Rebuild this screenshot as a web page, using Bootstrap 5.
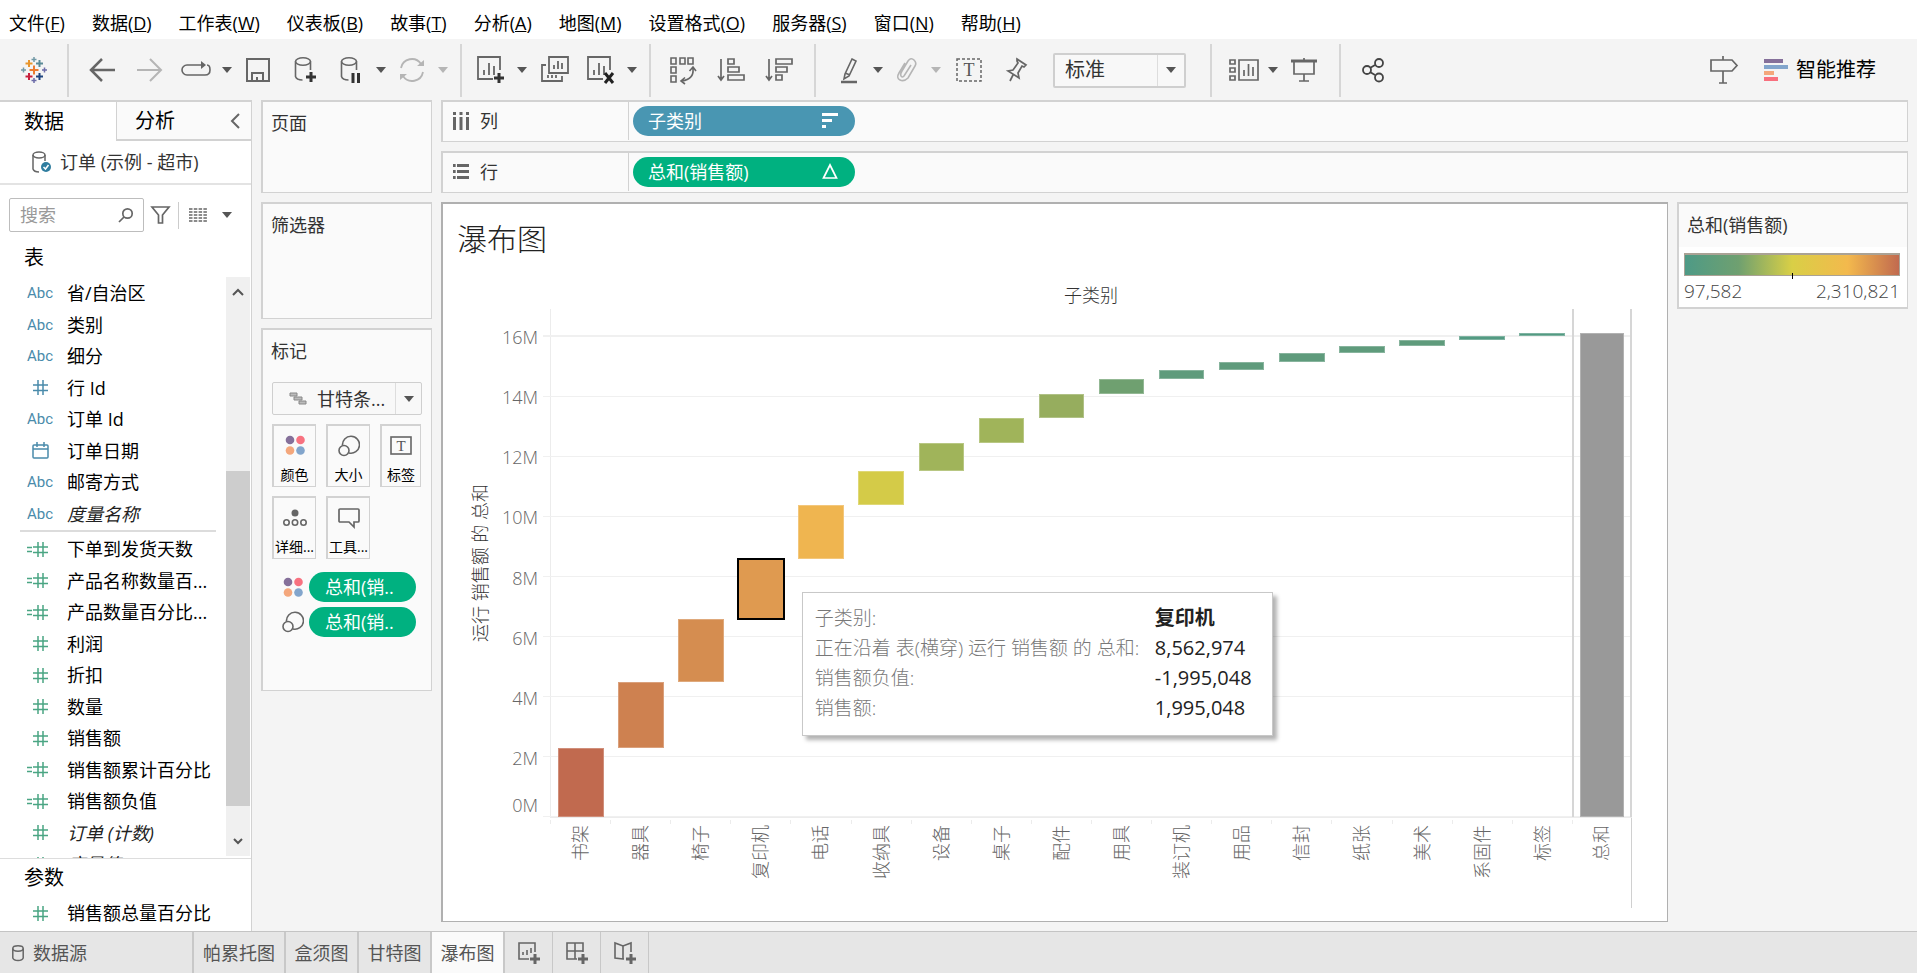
<!DOCTYPE html>
<html lang="zh-CN">
<head>
<meta charset="utf-8">
<meta name="viewport" content="width=device-width, initial-scale=1">
<title>瀑布图</title>
<link href="https://cdn.jsdelivr.net/npm/bootstrap@5.3.0/dist/css/bootstrap.min.css" rel="stylesheet">
<script src="https://cdn.jsdelivr.net/npm/bootstrap@5.3.0/dist/js/bootstrap.bundle.min.js" defer></script>
<style>
:root{--line:#d2d2d2;--ico:#666;--green:#00b180;--blue:#4996b2}
body{font-family:"Open Sans","Noto Sans CJK SC",sans-serif;font-size:18px;line-height:26px;color:#000;background:#f4f4f4;overflow:hidden}
button{font-family:inherit;color:inherit;background:none;border:0;padding:0}
svg{display:block;flex:none;overflow:visible}
.ln{fill:none;stroke:var(--ico);stroke-width:2}
.menubar{height:39px;padding:6px 0 0 9px;gap:27px}
.menubar a{color:#000;text-decoration:none}
.toolbar{height:61px;padding:1px 41px 0 10px}
.tb{display:flex;align-items:center;justify-content:center;height:40px;width:44px}
.tb.w-l{width:48px}.tb.w-s{width:40px}
.caret-btn{width:18px;height:34px;display:flex;align-items:center;justify-content:center}
.caret-btn::after,.caret-tri{content:"";border:5px solid transparent;border-top:6px solid #555;border-bottom:0}
.caret-btn.off::after{border-top-color:#b5b5b5}
.vsep{width:2px;height:53px;background:#d6d6d6}
.combo{border:2px solid #cfcfcf;border-radius:2px;background:#f8f8f8}
.combo select{appearance:none;border:0;background:none;outline:0;color:#333;min-width:0}
.combo .drop{border-left:1px solid #ddd;display:flex;align-items:center;justify-content:center}
.fit{width:133px;height:35px;font-size:20px}
.fit .drop{width:27px}
.fit select{padding-left:10px}
.showme{font-size:20px;gap:8px}
.main-row{gap:9px;padding:0 9px 9px 0}
.sidebar{width:252px;border-right:1px solid var(--line);margin-bottom:-9px}
.side-tabs{height:41px;font-size:20px}
.side-tabs button{border-top:2px solid var(--line);text-align:left}
.side-tabs .on{width:116px;padding-left:24px}
.side-tabs .off{background:#fafafa;border-left:1px solid var(--line);border-bottom:2px solid var(--line);padding:0 11px 0 18px}
.source{height:44px;padding-left:32px;gap:9px;color:#333;border-bottom:2px solid #e3e3e3}
.search-row{padding:13px 0 0 9px}
.search{width:135px;height:34px;border:1px solid #bdbdbd;border-radius:2px;padding:0 10px}
.search input{border:0;outline:0;width:100%;min-width:0;padding:0}
.search input::placeholder{color:#999;opacity:1}
.head{font-size:20px;padding-left:24px}
.head-tables{height:45px;padding-top:13px}
.head-params{height:38px;padding-top:6px}
.fields{display:grid;grid-auto-rows:32px 31px;margin:0;padding:0;list-style:none}
.fields li{display:flex;align-items:center;gap:13px;padding-left:26px;white-space:nowrap}
.fields .ic{width:28px;display:flex;justify-content:center;flex:none}
.abc{font:15px Roboto,sans-serif;color:#4a8bab}
.fields i{color:#222}
.divider{height:2px;background:#dcdcdc;margin:1px 10px 1px 20px}
.sbar{width:24px;background:#f0f0f0;margin:0 1px 2px 0}
.sbar .thumb{background:#cdcdcd;flex:345}
.params{border-top:1px solid #ddd;padding-bottom:2px}
.shelves{width:171px;gap:9px;color:#333}
.pane{background:#fafafa;border:1px solid var(--line);border-top-width:2px;border-left-width:2px}
.pane h2{font-size:18px;line-height:26px;font-weight:400;margin:0;padding:8px 0 0 8px}
.p-pages{height:93px}.p-filters{height:117px}.p-marks{height:363px}
.marktype{margin:18px 9px 9px;height:33px;border-width:1px}
.marktype .drop{width:27px}
.marktype .nm{padding-left:16px;gap:10px}
.marktype select{width:78px;padding:0}
.cards{display:grid;grid-template-columns:44px 44px 41px;gap:9px 10px;margin:0 9px}
.cards button{height:63px;border:2px solid var(--line);border-right-width:1px;border-bottom-width:1px;background:#fafafa;font-size:14px;line-height:20px;color:#000;display:flex;flex-direction:column;align-items:center;justify-content:space-between;padding:9px 0 1px;white-space:nowrap}
.enc{margin:13px 15px 0 18px;gap:5px}
.enc div{height:30px;gap:5px}
.enc .ei{width:23px;display:flex;justify-content:center}
.pillx{height:30px;border-radius:15px;color:#fff;background:var(--green);padding:0 16px;display:flex;align-items:center;justify-content:space-between}
.shelf{height:42px;color:#333;padding-bottom:2px}
.shelf .lab{width:186px;gap:11px;padding-left:10px}
.shelf .lab::after{content:"";width:1px;height:39px;background:var(--line);margin-left:auto}
.shelf .pillx{width:222px;margin-left:4px;padding:0 17px 0 15px}
.work{gap:9px}
.sheet{background:#fff;border:1px solid #b0b0b0;border-top-width:2px;border-left-width:2px;font-weight:300}
.sheet h1{font-size:30px;line-height:40px;font-weight:300;margin:15px 0 23px 14px;color:#222}
.chart{display:grid;grid-template-columns:28px 18px 61px minmax(0,1fr) 35px;grid-template-rows:27px minmax(0,1fr) 90px 13px;color:#666}
.ctitle{grid-area:1/4;text-align:center;color:#333}
.ytitle{grid-area:2/2;display:flex;align-items:center;justify-content:center;color:#333}
.rot{writing-mode:vertical-rl;text-orientation:sideways;transform:rotate(180deg);white-space:nowrap}
.yaxis{grid-area:2/3;position:relative}
.yaxis span{position:absolute;right:12px;transform:translateY(50%)}
.yaxis span:last-child{transform:none}
.plot{grid-area:2/4;position:relative;border-left:1px solid #ececec;border-bottom:1px solid #ececec;display:grid;grid-template-columns:repeat(18,1fr)}
.gl{position:absolute;left:-8px;right:0;height:1px;background:#f0f0f0}
.gl:first-child{height:2px}
.colx{display:flex;flex-direction:column-reverse;align-items:center;position:relative}
.colx .bar{width:76%;flex:none;box-shadow:inset 0 0 0 1px rgba(255,255,255,.25)}
.colx .bar.sel{outline:2px solid #000;outline-offset:-1px}
.colx.total{border-left:2px solid #d6d6d6;border-right:2px solid #d6d6d6}
.xaxis{grid-area:3/4;display:grid;grid-template-columns:repeat(18,1fr)}
.xaxis div{display:flex;justify-content:center;align-items:flex-start;padding-top:7px;background:linear-gradient(#ececec,#ececec) 0 2px/1px 4px no-repeat}
.xaxis div:last-child{border-right:1px solid #d0d0d0}
.tipbox{position:absolute;left:23.2%;top:55.7%;z-index:3;width:471px;height:144px;background:#fff;border:1px solid #c8c8c8;box-shadow:4px 4px 4px rgba(0,0,0,.3);padding:10px 12px;font-size:20px;line-height:30px;color:#787878;white-space:nowrap}
.tipbox td{padding:0;color:#222;font-weight:500}
.tipbox tr:first-child td{font-weight:600}
.tipbox th{font-size:19px;font-weight:300;padding:0;width:340px}
.legend{width:231px;height:107px;background:#fff;border-bottom-width:2px}
.legend .t{height:43px;background:#fafafa;padding:8px 8px 0;color:#333}
.legend .ramp{height:23px;margin:6px 7px 0 5px;border:1px solid #aaa295;border-top-width:2px;position:relative;background:linear-gradient(90deg,#4e9a86,#6fa070 25%,#d9cf46 50%,#f3b94d 76%,#c16a4f)}
.legend .ramp::after{content:"";position:absolute;left:50%;bottom:-4px;width:1px;height:6px;background:#000}
.legend .r{padding:2px 7px 0 5px;color:#444;font-weight:300;font-size:19px}
.sheets{height:42px;background:#e6e6e6;border-top:1px solid #c4c4c4;color:#555;position:relative}
.sheets button{border-right:2px solid #c8c8c8;padding:0 7px;text-align:center}
.sheets .src{width:194px;padding-left:12px;gap:9px}
.sheets .w4{width:92px}.sheets .w3{width:73px}.sheets .on{background:#fafafa}
.sheets .add{width:48px;display:flex;align-items:center;justify-content:center;border-right-width:1px}
</style>
</head>
<body class="vh-100 d-flex flex-column">

<svg width="0" height="0" class="position-absolute" aria-hidden="true">
<defs>
<symbol id="hash" viewBox="0 0 15 15"><path d="M0 5h15M0 10.500h15M5 0v15M10 0v15" fill="none" stroke="currentColor" stroke-width="1.500"/></symbol>
<symbol id="calc" viewBox="0 0 27 15"><path d="M6 5h15M6 10.500h15M11 0v15M16 0v15M0 5.500h5M0 9.500h5" fill="none" stroke="currentColor" stroke-width="1.500"/></symbol>
<symbol id="dots" viewBox="0 0 20 20"><circle cx="5" cy="5" r="4.300" fill="#85709a"/><circle cx="15.500" cy="5" r="4.300" fill="#f87280"/><circle cx="5" cy="15.500" r="4.300" fill="#f4a77c"/><circle cx="15.500" cy="15.500" r="4.300" fill="#82a5cc"/></symbol>
<symbol id="size" viewBox="0 0 22 22"><path d="M4.500 10.500A8.500 8.500 0 1 1 11 18" fill="none" stroke="#666" stroke-width="1.600"/><circle cx="6" cy="15.500" r="5" fill="none" stroke="#666" stroke-width="1.600"/></symbol>
</defs>
</svg>

<nav class="menubar bg-white d-flex align-items-center flex-shrink-0">
<a href="#">文件(<u>F</u>)</a><a href="#">数据(<u>D</u>)</a><a href="#">工作表(<u>W</u>)</a><a href="#">仪表板(<u>B</u>)</a><a href="#">故事(<u>T</u>)</a><a href="#">分析(<u>A</u>)</a><a href="#">地图(<u>M</u>)</a><a href="#">设置格式(<u>O</u>)</a><a href="#">服务器(<u>S</u>)</a><a href="#">窗口(<u>N</u>)</a><a href="#">帮助(<u>H</u>)</a>
</nav>

<header class="toolbar d-flex align-items-center flex-shrink-0">
<button class="tb w-l" aria-label="主页"><svg width="26" height="26" fill="none" stroke-width="2"><path d="M13 8.500v9M8.500 13h9" stroke="#eb7b30"/><path d="M8 3v7M4.500 6.500h7" stroke="#e8952c"/><path d="M18.500 3v7M15 6.500h7" stroke="#5a8a96"/><path d="M8 16v7M4.500 19.500h7" stroke="#c8203c"/><path d="M18.500 16v7M15 19.500h7" stroke="#1f447e"/><path d="M13 0v5M10.500 2.500h5M2.500 10.500v5M0 13h5" stroke="#7199a6" stroke-width="1.500"/><path d="M13 21v5M10.500 23.500h5M23.500 10.500v5M21 13h5" stroke="#6b6ba8" stroke-width="1.500"/></svg></button>
<span class="vsep" style="margin-left:9px"></span>
<button class="tb w-l" style="margin-left:9px" aria-label="撤消"><svg width="26" height="24" class="ln" style="stroke-width:2.500"><path d="M26 12H2M13 1L2 12l11 11"/></svg></button>
<button class="tb w-l" aria-label="重做"><svg width="26" height="24" class="ln" style="stroke:#b5b5b5"><path d="M0 12h24M13 1l11 11L13 23"/></svg></button>
<button class="tb" aria-label="重播"><svg width="30" height="18" class="ln" style="stroke-width:1.600"><path d="M22 4H6a5 5 0 0 0 0 10h18q5 0 5-5t-3-5"/><path d="M20 0l5 4-5 4z" fill="#666" stroke="none"/></svg></button>
<button class="caret-btn" aria-label="重播选项"></button>
<button class="tb" aria-label="保存"><svg width="24" height="24" class="ln"><path d="M1 1h22v22H1zM6 23v-8h11v8M11 23v-4"/></svg></button>
<button class="tb w-l" style="padding-left:4px" aria-label="新建数据源"><svg width="24" height="26" class="ln" style="stroke-width:1.600"><ellipse cx="9" cy="4.500" rx="7.500" ry="3.700"/><path d="M1.500 4.500v15q1 3.500 7 3.500M16.500 4.500V13"/><path d="M17 15v10M12 20h10" stroke="#333" stroke-width="3"/></svg></button>
<button class="tb" aria-label="暂停更新"><svg width="22" height="26" class="ln" style="stroke-width:1.600"><ellipse cx="10" cy="4.500" rx="7.500" ry="3.700"/><path d="M2.500 4.500v15q1 3.500 7 3.500M17.500 4.500V13"/><path d="M14 16v10M19.500 16v10" stroke="#333" stroke-width="3"/></svg></button>
<button class="caret-btn" aria-label="更新选项"></button>
<button class="tb" aria-label="刷新"><svg width="26" height="26" class="ln" style="stroke:#b5b5b5;stroke-width:1.800"><path d="M2 11A11 11 0 0 1 22 7M24 15A11 11 0 0 1 4 19"/><path d="M18 9h7V3zM8 17H1v6z" fill="#b5b5b5" stroke="none"/></svg></button>
<button class="caret-btn off" aria-label="刷新选项"></button>
<span class="vsep" style="margin-left:8px"></span>
<button class="tb" style="margin-left:7px" aria-label="新建工作表"><svg width="28" height="28" class="ln" style="stroke-width:1.800"><path d="M16 23H1V1h22v13M7 19v-5M12 19V7M17 19v-9"/><path d="M22 17v10M17 22h10" stroke="#333" stroke-width="3"/></svg></button>
<button class="caret-btn" aria-label="工作表选项"></button>
<button class="tb w-l" aria-label="复制"><svg width="28" height="28" class="ln" style="stroke-width:1.800"><path d="M8 1h19v16H8zM13 13V9M17 13V5M21 13V7M5 9H1v16h20v-5M7 22v-3M11 22v-3M15 22v-3"/></svg></button>
<button class="tb" aria-label="清除"><svg width="28" height="28" class="ln" style="stroke-width:1.800"><path d="M16 23H1V1h22v13M7 19v-5M12 19V7M17 19v-9"/><path d="M18 17l8 10M26 17l-8 10" stroke="#222" stroke-width="3"/></svg></button>
<button class="caret-btn" aria-label="清除选项"></button>
<span class="vsep" style="margin-left:8px"></span>
<button class="tb w-l" style="margin-left:8px" aria-label="交换行和列"><svg width="26" height="28" class="ln" style="stroke-width:1.600"><path d="M1 2h5v6H1zM10 2h5v6h-5zM18 2h5v6h-5zM1 11h5v6H1zM1 20h5v6H1zM23 13q1 10-11 12M19.500 15l3.500-4 3 4M15 21.500L11 25l4 3"/></svg></button>
<button class="tb w-l" aria-label="升序排序"><svg width="27" height="24" class="ln" style="stroke-width:1.700"><path d="M3 1v20M0 18l3 4 3-4M10 1h6v5h-6zM10 9h11v5H10zM10 17h16v5H10z"/></svg></button>
<button class="tb w-l" aria-label="降序排序"><svg width="27" height="24" class="ln" style="stroke-width:1.700"><path d="M3 1v20M0 18l3 4 3-4M10 1h16v5H10zM10 9h11v5H10zM10 17h6v5h-6z"/></svg></button>
<span class="vsep" style="margin-left:11px"></span>
<button class="tb w-s" style="margin-left:13px" aria-label="突出显示"><svg width="18" height="26" class="ln" style="stroke-width:1.600"><path d="M12 2l4 2-7 15-5 3 1-5zM5 16l5 2"/><path d="M1 25h16" stroke-width="2.500"/></svg></button>
<button class="caret-btn" aria-label="突出显示选项"></button>
<button class="tb w-s" aria-label="组成员"><svg width="20" height="24" class="ln" style="stroke:#b5b5b5;stroke-width:1.600"><path d="M14 7L7 18q-2 2-3 0t1-5L11 3q3-4 6-1t1 6l-7 12q-4 4-8 2t-1-7L8 5"/></svg></button>
<button class="caret-btn off" aria-label="组选项"></button>
<button class="tb w-l" aria-label="显示标记标签"><svg width="26" height="24"><rect x="1" y="1" width="24" height="22" class="ln" style="stroke-width:1.500" stroke-dasharray="3 2"/><text x="13" y="18" text-anchor="middle" font-size="18" font-family="Liberation Serif" fill="#555">T</text></svg></button>
<button class="tb w-l" aria-label="固定"><svg width="22" height="24" class="ln" style="stroke-width:1.700"><path d="M11 1l9 6-2 2-2-1-4 7 1 5-11-7 5-1 5-7-1-2zM7 17l-3 6"/></svg></button>
<div class="combo fit d-flex" style="margin-left:12px"><select class="flex-grow-1" aria-label="适合"><option>标准</option></select><span class="drop"><span class="caret-tri"></span></span></div>
<span class="vsep" style="margin-left:24px"></span>
<button class="tb w-s" style="margin-left:12px" aria-label="显示卡"><svg width="30" height="22" class="ln" style="stroke-width:1.700"><path d="M10 1h19v20H10zM1 1h5v4H1zM1 9h5v4H1zM1 17h5v4H1zM15 17v-6M19.500 17V5M24 17V8"/></svg></button>
<button class="caret-btn" aria-label="卡选项"></button>
<button class="tb" aria-label="演示模式"><svg width="26" height="24" class="ln" style="stroke-width:1.700"><path d="M0 3h26" stroke-width="3"/><path d="M3 4v12h20V4M13 0v3M13 16v7M8 23h10"/></svg></button>
<span class="vsep" style="margin-left:13px"></span>
<button class="tb w-l" style="margin-left:8px" aria-label="共享"><svg width="22" height="24" class="ln" style="stroke:#444;stroke-width:1.800"><circle cx="5" cy="12" r="4"/><circle cx="17" cy="5" r="4"/><circle cx="17" cy="19.500" r="4"/><path d="M8 10l5-3M8 14l5 3"/></svg></button>
<button class="tb w-l ms-auto" aria-label="数据指南"><svg width="28" height="28" class="ln" style="stroke-width:1.700"><path d="M1 4h21l5 5.500-5 5.500H1zM13 0v4M13 15v12M9 27h8"/></svg></button>
<button class="showme d-flex align-items-center" style="margin-left:16px"><svg width="24" height="24"><path fill="#85709a" d="M0 1h19v4H0z"/><path fill="#82a5cc" d="M0 7h24v4H0z"/><path fill="#f4a77c" d="M0 13h10v4H0z"/><path fill="#f8707e" d="M0 19h14v4H0z"/></svg>智能推荐</button>
</header>

<main class="main-row d-flex flex-grow-1" style="min-height:0">
<aside class="sidebar bg-white d-flex flex-column flex-shrink-0">
<div class="side-tabs d-flex"><button class="on">数据</button><button class="off flex-grow-1 d-flex align-items-center justify-content-between">分析<svg width="9" height="14" class="ln"><path d="M8 0L1 7l7 7"/></svg></button></div>
<div class="source d-flex align-items-center"><svg width="19" height="22" class="ln" style="stroke-width:1.500"><ellipse cx="7" cy="4" rx="6" ry="3"/><path d="M1 4v14q1 3 6 3M13 4v6"/><circle cx="14" cy="16" r="5" fill="#2f7d9f" stroke="none"/><path d="M11.500 16l2 2 3-4" stroke="#fff"/></svg>订单 (示例 - 超市)</div>
<div class="search-row d-flex align-items-center">
<label class="search d-flex align-items-center"><input type="text" placeholder="搜索" aria-label="搜索"><svg width="14" height="14" class="ln" style="stroke-width:1.700"><circle cx="8.500" cy="5.500" r="4.700"/><path d="M5 9l-5 5"/></svg></label>
<button aria-label="筛选" style="margin-left:7px"><svg width="19" height="18" class="ln" style="stroke-width:1.700"><path d="M1 1h17l-6.500 8v8h-4V9z"/></svg></button>
<span style="width:1px;height:27px;background:#ccc;margin:0 10px 0 8px"></span>
<button aria-label="视图"><svg width="18" height="14" class="ln" style="stroke-width:1.500" stroke-dasharray="3.500 1.300"><path d="M0 1h18M0 4h18M0 7h18M0 10h18M0 13h18"/></svg></button>
<button class="caret-btn" style="margin-left:11px" aria-label="视图选项"></button>
</div>
<div class="head head-tables">表</div>
<div class="d-flex flex-grow-1 overflow-hidden" style="min-height:0;flex-basis:0">
<div class="flex-grow-1 overflow-hidden">
<ul class="fields" style="color:#000">
<li><span class="ic abc">Abc</span>省/自治区</li>
<li><span class="ic abc">Abc</span>类别</li>
<li><span class="ic abc">Abc</span>细分</li>
<li><span class="ic abc"><svg width="15" height="15"><use href="#hash"/></svg></span>行 Id</li>
<li><span class="ic abc">Abc</span>订单 Id</li>
<li><span class="ic abc"><svg width="17" height="17" fill="none" stroke="currentColor" stroke-width="1.500"><rect x="1" y="3" width="15" height="13" rx="1"/><path d="M1 7h15M5 0v5M12 0v5"/></svg></span>订单日期</li>
<li><span class="ic abc">Abc</span>邮寄方式</li>
<li><span class="ic abc">Abc</span><i>度量名称</i></li>
</ul>
<div class="divider"></div>
<ul class="fields" id="measures"></ul>
</div>
<div class="sbar d-flex flex-column flex-shrink-0 align-items-stretch">
<button style="flex:191" class="d-flex justify-content-center pt-2" aria-label="向上"><svg width="12" height="14" class="ln" style="stroke:#555"><path d="M1 10l5-5 5 5"/></svg></button>
<div class="thumb"></div>
<button style="flex:43" class="d-flex justify-content-center align-items-end pb-2" aria-label="向下"><svg width="10" height="10" class="ln" style="stroke:#555"><path d="M1 1l4 4 4-4"/></svg></button>
</div>
</div>
<div class="params"><div class="head head-params">参数</div>
<ul class="fields"><li><span class="ic" style="color:#4aa583"><svg width="15" height="15"><use href="#hash"/></svg></span>销售额总量百分比</li></ul></div>
</aside>

<section class="shelves d-flex flex-column flex-shrink-0">
<div class="pane p-pages"><h2>页面</h2></div>
<div class="pane p-filters"><h2>筛选器</h2></div>
<div class="pane p-marks"><h2>标记</h2>
<div class="combo marktype d-flex"><div class="nm d-flex align-items-center flex-grow-1"><svg width="18" height="14" fill="#bbb" stroke="#888"><path d="M1 1h7v3H1zM5 5h8v3H5zM10 9h7v3h-7z"/></svg><select aria-label="标记类型"><option>甘特条...</option></select></div><span class="drop"><span class="caret-tri"></span></span></div>
<div class="cards">
<button><svg width="20" height="20"><use href="#dots"/></svg>颜色</button>
<button><svg width="22" height="22"><use href="#size"/></svg>大小</button>
<button><svg width="22" height="20"><rect x="1" y="2" width="20" height="17" class="ln" style="stroke-width:1.600"/><text x="11" y="16" text-anchor="middle" font-size="15" font-family="Liberation Serif" fill="#555">T</text></svg>标签</button>
<button><svg width="24" height="22" class="ln" style="stroke-width:1.600"><circle cx="12" cy="6" r="3.500" fill="#666" stroke="none"/><circle cx="3.500" cy="15.500" r="2.700"/><circle cx="12" cy="15.500" r="2.700"/><circle cx="20.500" cy="15.500" r="2.700"/></svg>详细...</button>
<button><svg width="22" height="22" class="ln" style="stroke-width:1.700"><path d="M2 2h18q1 0 1 1v11q0 1-1 1h-4v5l-5-5H2q-1 0-1-1V3q0-1 1-1z"/></svg>工具...</button>
</div>
<div class="enc d-flex flex-column">
<div class="d-flex align-items-center"><span class="ei"><svg width="20" height="20"><use href="#dots"/></svg></span><span class="pillx flex-grow-1">总和(销..</span></div>
<div class="d-flex align-items-center"><span class="ei"><svg width="22" height="22"><use href="#size"/></svg></span><span class="pillx flex-grow-1">总和(销..</span></div>
</div>
</div>
</section>

<section class="work d-flex flex-column flex-grow-1" style="min-width:0">
<div class="pane shelf d-flex align-items-center flex-shrink-0"><div class="lab d-flex align-items-center"><svg width="16" height="18" fill="#666"><path d="M0 0h3v3H0zM0 5h3v13H0zM6.500 0h3v3h-3zM6.500 5h3v13h-3zM13 0h3v3h-3zM13 5h3v13h-3z"/></svg>列</div><span class="pillx" style="background:var(--blue)">子类别<svg width="16" height="15" fill="#fff"><path d="M0 0h16v3H0zM0 6h10v3H0zM0 12h4v3H0z"/></svg></span></div>
<div class="pane shelf d-flex align-items-center flex-shrink-0"><div class="lab d-flex align-items-center"><svg width="16" height="15" viewBox="0 0 18 15" preserveAspectRatio="none" fill="#666"><path d="M0 0h3v3H0zM4.500 0H18v3H4.500zM0 6h3v3H0zM4.500 6H18v3H4.500zM0 12h3v3H0zM4.500 12H18v3H4.500z"/></svg>行</div><span class="pillx">总和(销售额)<svg width="16" height="15" fill="none" stroke="#fff" stroke-width="1.700"><path d="M8 1l6.500 13h-13z"/></svg></span></div>
<div class="work d-flex flex-grow-1" style="min-height:0">
<div class="sheet d-flex flex-column flex-grow-1" style="min-width:0">
<h1>瀑布图</h1>
<div class="chart flex-grow-1">
<div class="ctitle">子类别</div>
<div class="ytitle"><span class="rot">运行 销售额 的 总和</span></div>
<div class="yaxis" id="yaxis"></div>
<div class="plot" id="plot">
<div class="tipbox" role="tooltip"><table><tr><th>子类别:</th><td>复印机</td></tr><tr><th>正在沿着 表(横穿) 运行 销售额 的 总和:</th><td>8,562,974</td></tr><tr><th>销售额负值:</th><td>-1,995,048</td></tr><tr><th>销售额:</th><td>1,995,048</td></tr></table></div>
</div>
<div class="xaxis" id="xaxis"></div>
</div>
</div>
<div class="pane legend flex-shrink-0"><div class="t">总和(销售额)</div><div class="ramp"></div><div class="r d-flex justify-content-between"><span>97,582</span><span>2,310,821</span></div></div>
</div>
</section>
</main>

<footer class="sheets d-flex flex-shrink-0">
<button class="src d-flex align-items-center"><svg width="12" height="16" class="ln" style="stroke-width:1.500"><ellipse cx="6" cy="3.500" rx="5.200" ry="2.700"/><path d="M.8 3.500v9.500q1 2.500 5.200 2.500t5.200-2.500V3.500"/></svg>数据源</button>
<button class="w4">帕累托图</button><button class="w3">盒须图</button><button class="w3">甘特图</button><button class="w3 on">瀑布图</button>
<button class="add" aria-label="新建工作表"><svg width="22" height="22" class="ln" style="stroke-width:1.600"><path d="M11 17H1V1h16v9M5 13v-3M9 13V8M13 11V6"/><path d="M17 12v10M12 17h10" stroke-width="3"/></svg></button>
<button class="add" aria-label="新建仪表板"><svg width="22" height="22" class="ln" style="stroke-width:1.600"><path d="M11 17H1V1h16v9M9 1v16M1 9h16"/><path d="M17 12v10M12 17h10" stroke-width="3"/></svg></button>
<button class="add" aria-label="新建故事"><svg width="22" height="22" class="ln" style="stroke-width:1.600"><path d="M10 17H9l-8-1V1l8 3 8-3v9M9 4v13"/><path d="M17 12v10M12 17h10" stroke-width="3"/></svg></button>
</footer>

<script>
// Measures: name, calculated?, italic?
const measures=[['下单到发货天数',1],['产品名称数量百...',1],['产品数量百分比...',1],['利润'],['折扣'],['数量'],['销售额'],['销售额累计百分比',1],['销售额负值',1],['订单 (计数)',0,1],['度量值',0,1]];
document.getElementById('measures').innerHTML=measures.map(([n,c,i])=>`<li><span class="ic" style="color:#4aa583"><svg width="${c?27:15}" height="15"><use href="#${c?'calc':'hash'}"/></svg></span>${i?`<i>${n}</i>`:n}</li>`).join('');

// Waterfall: category, running total after it (millions), colour
const domainMax=16.93;
const data=[['书架',2.31,'#c16a4f'],['器具',4.5,'#ce8150'],['椅子',6.6,'#d58d50'],['复印机',8.6,'#df9a50'],['电话',10.4,'#efb550'],['收纳具',11.54,'#d4cb48'],['设备',12.45,'#a0b45a'],['桌子',13.3,'#a0b45a'],['配件',14.1,'#96ad5e'],['用具',14.6,'#6fa070'],['装订机',14.9,'#5f9b7c'],['用品',15.15,'#5f9b7c'],['信封',15.45,'#5f9b7c'],['纸张',15.7,'#5f9b7c'],['美术',15.89,'#5f9b7c'],['系固件',16.03,'#539a82'],['标签',16.14,'#539a82']];
const pct=v=>(v/domainMax*100).toFixed(2)+'%';
let run=0,bars='';
for(const [name,end,color] of data){
  bars+=`<div class="colx"><div style="height:${pct(run)}"></div><div class="bar${name==='复印机'?' sel':''}" style="height:${pct(end-run)};background:${color}"></div></div>`;
  run=end;
}
bars+=`<div class="colx total"><div class="bar" style="height:${pct(run)};background:#999;width:80%"></div></div>`;
const ticks=[16,14,12,10,8,6,4,2,0];
document.getElementById('plot').insertAdjacentHTML('afterbegin',ticks.map(t=>`<div class="gl" style="bottom:${pct(t)}"></div>`).join('')+bars);
document.getElementById('yaxis').innerHTML=ticks.map(t=>`<span style="bottom:${pct(t)}">${t}M</span>`).join('');
document.getElementById('xaxis').innerHTML=[...data.map(d=>d[0]),'总和'].map(n=>`<div><span class="rot">${n}</span></div>`).join('');
</script>
</body>
</html>
